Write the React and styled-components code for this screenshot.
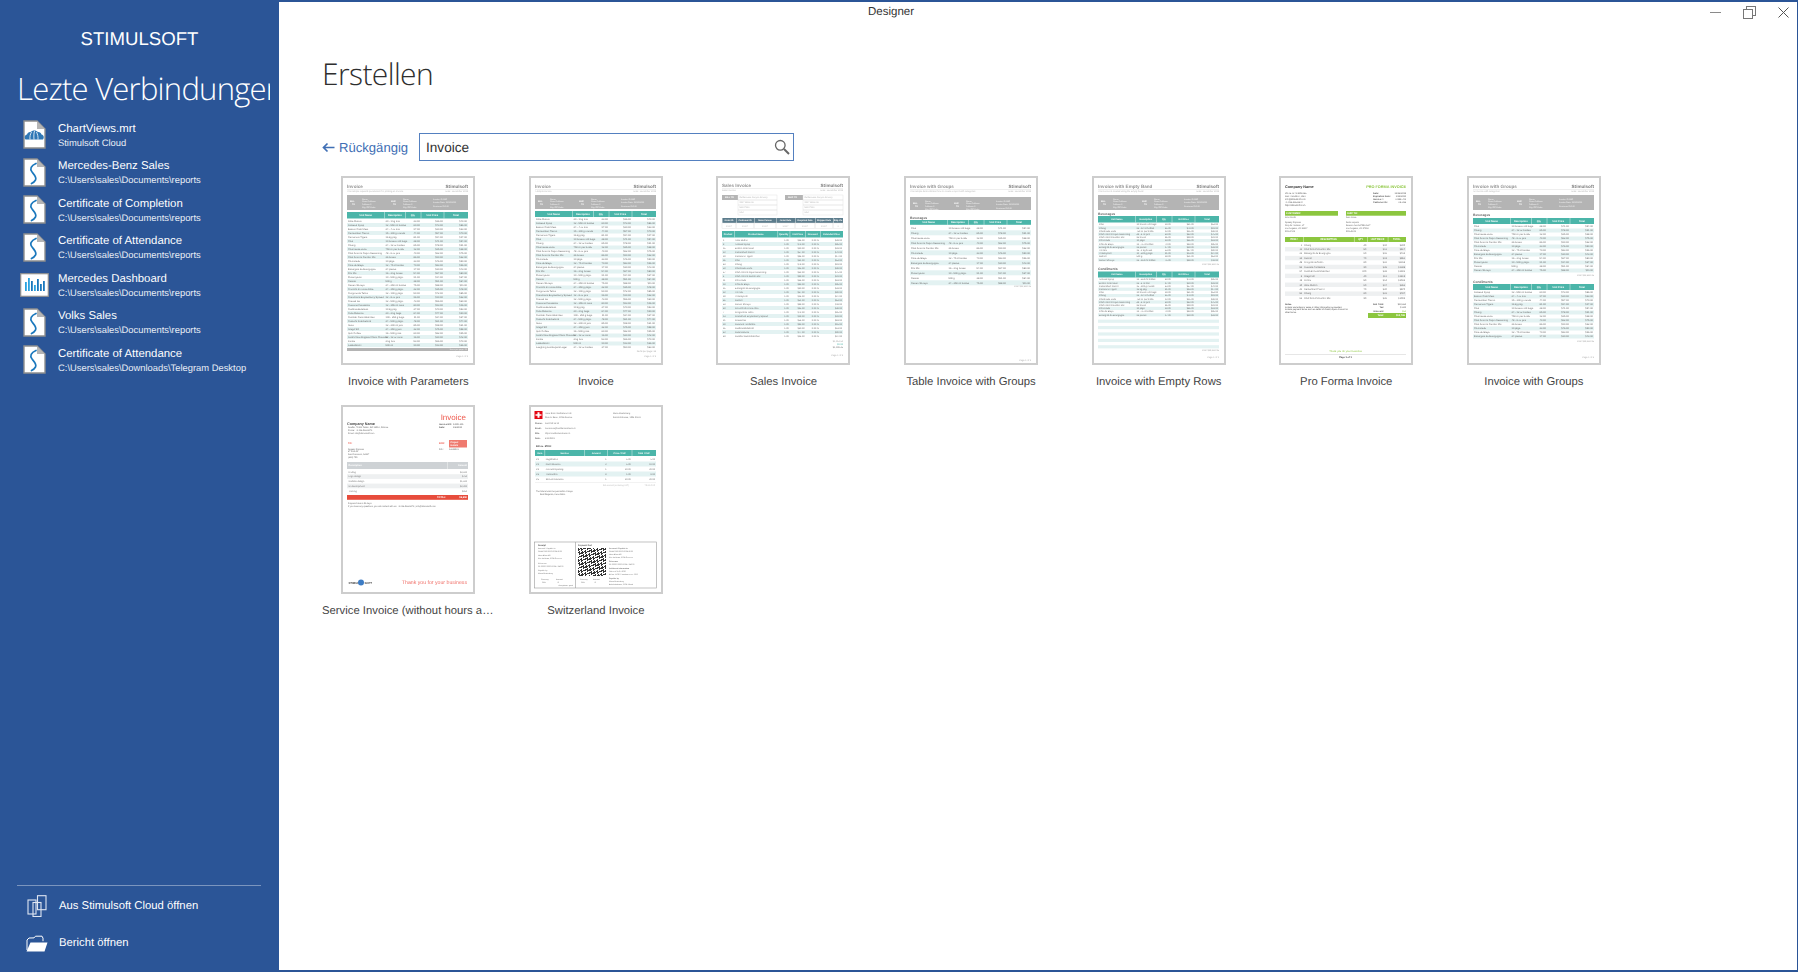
import React from 'react';
import styled, { createGlobalStyle } from 'styled-components';

const BLUE = '#2b5597';
const TEAL = '#4bb5a9';
const ALT = '#e3f2f2';
const GREEN = '#8cc63f';
const RED = '#e74c3c';

const Global = createGlobalStyle`
  html, body { margin: 0; padding: 0; background: ${BLUE}; }
  body { font-family: "Liberation Sans", Arial, sans-serif; text-rendering: geometricPrecision; }
`;

const Windowed = styled.div`
  width: 1798px; height: 972px; box-sizing: border-box; padding: 2px 1px 2px 0;
  background: ${BLUE}; display: flex; overflow: hidden;
`;
const Sidebar = styled.aside`
  width: 279px; flex: none; margin-top: -2px; margin-bottom: -2px; display: flex; flex-direction: column;
  color: #fff; padding-bottom: 10px; box-sizing: border-box;
`;
const Brand = styled.div`
  margin-top: 28px; text-align: center; font-size: 18.6px; line-height: 22px;
`;
const RecentTitle = styled.h2`
  margin: 17px 9px 0 17px; font: 300 31px/44px "Open Sans", sans-serif; letter-spacing: -.75px;
  white-space: nowrap; overflow: hidden;
`;
const RecentList = styled.div`
  margin-top: 5px; display: flex; flex-direction: column;
`;
const Recent = styled.div`
  height: 37.5px; display: flex; align-items: center; gap: 8px; padding-left: 18px;
`;
const IconCell = styled.div`
  width: 32px; flex: none; display: flex; justify-content: center; align-items: center;
`;
const RecentText = styled.div`
  display: flex; flex-direction: column; padding-top: 1.5px;
`;
const RecentName = styled.div`
  font-size: 11.4px; line-height: 13px; white-space: nowrap;
`;
const RecentPath = styled.div`
  font-size: 9.4px; line-height: 13px; white-space: nowrap; color: #e8edf5;
`;
const SideFoot = styled.div`
  margin-top: auto; margin-left: 17px; margin-right: 18px; border-top: 1px solid rgba(255,255,255,.38);
  padding-top: 1px; display: flex; flex-direction: column;
`;
const FootItem = styled.div`
  height: 37.5px; display: flex; align-items: center; font-size: 11.3px; gap: 10px; padding-left: 8px;
`;
const FootIcon = styled.div`
  width: 24px; flex: none; display: flex; justify-content: center;
`;

const Main = styled.main`
  flex: 1; background: #fff; display: flex; flex-direction: column; min-width: 0;
`;
const TitleBar = styled.header`
  height: 20px; display: flex; align-items: center; padding-left: 589px; padding-right: 8px;
  font-size: 11.5px; color: #333;
`;
const WinControls = styled.div`
  margin-left: auto; display: flex; align-items: center; gap: 22px;
`;
const Content = styled.div`
  padding: 30px 0 0 43px; display: flex; flex-direction: column;
`;
const Heading = styled.h1`
  margin: 0; font: 300 30px/44px "Open Sans", sans-serif; letter-spacing: -.6px; color: #2e2e2e;
`;
const Toolbar = styled.div`
  margin-top: 37px; display: flex; align-items: center; height: 28px;
`;
const Back = styled.div`
  display: flex; align-items: center; gap: 4px; color: #3f6fb5; font-size: 13.1px; width: 97px;
`;
const SearchBox = styled.div`
  width: 375px; height: 28px; box-sizing: border-box; border: 1.5px solid #5480c0; display: flex;
  align-items: center; justify-content: space-between; padding: 0 3px 0 6px; font-size: 13.6px; color: #333;
`;
const Grid = styled.div`
  margin-top: 15px; display: grid; grid-template-columns: repeat(7, 172.6px); column-gap: 15px; row-gap: 0;
  grid-auto-rows: 229px;
`;
const Cell = styled.div`
  display: flex; flex-direction: column; align-items: center; min-width: 0;
`;
const Card = styled.div`
  width: 134px; height: 189px; box-sizing: border-box; border: 2px solid #cdcdcd; background: #fff; flex: none;
`;
const Art = styled.svg`
  display: block; width: 130px; height: 185px; filter: blur(.3px);
`;
const Label = styled.div`
  margin-top: 10px; width: 100%; text-align: center; font-size: 11.3px; line-height: 15px; color: #444;
  white-space: nowrap; overflow: hidden; text-overflow: ellipsis;
`;
const Tx = styled.text`
  font-family: "Liberation Sans", Arial, sans-serif;
`;

/* ---------- side icons ---------- */
const Page = ({ children }) => (
  <svg width="23" height="29" viewBox="0 0 23 29">
    <path d="M1 1h13l8 8v19H1z" fill="#fff" stroke="#8f8f8f" strokeWidth="1.4" />
    <path d="M14 1v8h8z" fill="#b5b5b5" />
    {children}
  </svg>
);
const SIcon = () => (
  <Page>
    <path d="M13 5.500C8 7.500 6.500 11 9 14c2.500 3 5 5.500 3.500 8-.8 1.500-2 2.500-4 3.500" fill="none" stroke="#1b78bd" strokeWidth="1.700" strokeLinecap="round" />
  </Page>
);
const CloudIcon = () => (
  <Page>
    <path d="M2.500 19.500c-1.500-2-.8-4.500 1.500-5 .5-1.800 2-2.800 3.500-2.500 1.800-2 5.500-2.200 7.500 0 1.800-.2 3 1 3.500 2.500 2.300.5 3 3 1.500 5z" fill="#2f77b5" />
    <path d="M7 19.500c-.3-2.800.2-5.300 1.500-7.500M11 19.500c-.3-3.500-.2-6 .5-8.500M15 19.500c.2-2.800-.3-5-1.500-7.500" stroke="#fff" strokeWidth=".8" fill="none" />
  </Page>
);
const DashIcon = () => (
  <svg width="29" height="24" viewBox="0 0 29 24">
    <rect x=".7" y=".7" width="27.600" height="22.600" fill="#fff" stroke="#8f8f8f" strokeWidth="1.2" />
    {[[5,9,'#29a3e0'],[8,13,'#29a3e0'],[11,10,'#1b78bd'],[14,6,'#29a3e0'],[17,12,'#1b78bd'],[20,7,'#1b78bd'],[23,10,'#1b78bd']].map(([x, h, c]) => (
      <rect key={x} x={x} y={18 - h} width="1.800" height={h} fill={c} />
    ))}
  </svg>
);
const StackIcon = () => (
  <svg width="20" height="22" viewBox="0 0 20 22" fill="none" stroke="#dfe6f2" strokeWidth="1.1">
    <rect x="10.500" y=".7" width="8.500" height="14" />
    <rect x="1" y="5" width="8" height="14" />
    <rect x="6" y="7.500" width="8" height="14" />
  </svg>
);
const FolderIcon = () => (
  <svg width="22" height="17" viewBox="0 0 22 17">
    <path d="M1 15V5l2-2 5-.1 1.500-1.700h6.500l1 2v3" fill="none" stroke="#fff" strokeWidth="1" />
    <path d="M0.500 16.500 4.500 7.500h17l-3 9z" fill="#fff" />
  </svg>
);
const ArrowLeft = () => (
  <svg width="13" height="11" viewBox="0 0 13 11" fill="none" stroke="#3f6fb5" strokeWidth="1.700">
    <path d="M12.500 5.500H1.500M5.500 1.500 1.500 5.500l4 4" />
  </svg>
);
const SearchIcon = () => (
  <svg width="16" height="16" viewBox="0 0 16 16" fill="none" stroke="#666" >
    <circle cx="6.300" cy="6.300" r="4.800" strokeWidth="1.300" />
    <path d="M10 10l5 5" strokeWidth="2" />
  </svg>
);
const MinIcon = () => (
  <svg width="11" height="11" viewBox="0 0 11 11"><path d="M0 5.500h11" stroke="#8a8a8a" /></svg>
);
const RestoreIcon = () => (
  <svg width="13" height="13" viewBox="0 0 13 13" fill="#fff" stroke="#777">
    <rect x="3.500" y=".5" width="9" height="9" />
    <rect x=".5" y="3.500" width="9" height="9" />
  </svg>
);
const CloseIcon = () => (
  <svg width="11" height="11" viewBox="0 0 11 11"><path d="M.5.500l10 10M10.500.5l-10 10" stroke="#555" /></svg>
);

/* ---------- thumbnails ---------- */
const PRODUCTS = [
  ['Alice Mutton','20 - 1 kg tins'],['Aniseed Syrup','12 - 550 ml bottles'],['Boston Crab Meat','24 - 4 oz tins'],
  ['Camembert Pierrot','15 - 300 g rounds'],['Carnarvon Tigers','16 kg pkg.'],['Chai','10 boxes x 20 bags'],
  ['Chang','24 - 12 oz bottles'],['Chartreuse verte','750 cc per bottle'],["Chef Anton's Cajun Seasoning",'48 - 6 oz jars'],
  ["Chef Anton's Gumbo Mix",'36 boxes'],['Chocolade','10 pkgs.'],['Côte de Blaye','12 - 75 cl bottles'],
  ['Escargots de Bourgogne','24 pieces'],['Filo Mix','16 - 2 kg boxes'],['Flotemysost','10 - 500 g pkgs.'],
  ['Geitost','500 g'],['Genen Shouyu','24 - 250 ml bottles'],['Gnocchi di nonna Alice','24 - 250 g pkgs.'],
  ['Gorgonzola Telino','12 - 100 g pkgs'],["Grandma's Boysenberry Spread",'12 - 8 oz jars'],['Gravad lax','12 - 500 g pkgs.'],
  ['Guaraná Fantástica','12 - 355 ml cans'],['Gudbrandsdalsost','10 kg pkg.'],['Gula Malacca','20 - 2 kg bags'],
  ['Gumbär Gummibärchen','100 - 250 g bags'],["Gustaf's Knäckebröd",'24 - 500 g pkgs.'],['Ikura','12 - 200 ml jars'],
  ['Inlagd Sill','24 - 250 g  jars'],['Ipoh Coffee','16 - 500 g tins'],["Jack's New England Clam Chowder",'12 - 12 oz cans'],
  ['Konbu','2 kg box'],['Lakkalikööri','500 ml'],['Laughing Lumberjack Lager','24 - 12 oz bottles'],
];
const num = (i, k) => ((i * 37 + k * 13) % 90 + 10) + '.00';
const money = (i, k) => '$' + num(i, k);
const STD = [
  { w: .31, label: 'Unit Name', val: i => PRODUCTS[i % 33][0] },
  { w: .17, label: 'Description', val: i => PRODUCTS[i % 33][1] },
  { w: .13, label: 'Qty', end: 1, val: i => num(i, 1) },
  { w: .19, label: 'Unit Price', end: 1, val: i => money(i, 2) },
  { w: .2, label: 'Total', end: 1, val: i => money(i, 3) },
];
const SALES = [
  { w: .1, label: 'Product', val: i => String(i * 7 % 60 + 1) },
  { w: .36, label: 'Product Name', val: i => PRODUCTS[i % 33][0] },
  { w: .1, label: 'Quantity', end: 1, val: () => '1.00' },
  { w: .13, label: 'Unit Price', end: 1, val: i => money(i, 2) },
  { w: .12, label: 'Discount', end: 1, val: () => '0.00 %' },
  { w: .19, label: 'Extended Price', end: 1, val: i => money(i, 3) },
];

function Table({ y, head, rowH, n, start = 0, empty = 0, cols = STD, x = 6, w = 121, color = TEAL, alt = ALT, size = 2.5 }) {
  const total = n + empty;
  const xs = [];
  cols.reduce((acc, c) => { xs.push(acc); return acc + c.w * w; }, x);
  return (
    <g>
      <rect x={x} y={y} width={w} height={head} fill={color} />
      {xs.slice(1).map(cx => <rect key={cx} x={cx} y={y} width=".4" height={head} fill="#fff" />)}
      {cols.map((c, k) => (
        <Tx key={c.label} x={xs[k] + c.w * w / 2} y={y + head / 2 + .9} fontSize={size} fontWeight="700" fill="#fff" textAnchor="middle">{c.label}</Tx>
      ))}
      {Array.from({ length: total }, (_, r) => {
        const ry = y + head + .5 + r * rowH;
        return (
          <g key={r}>
            {r % 2 === 1 && <rect x={x} y={ry} width={w} height={rowH} fill={alt} />}
            {r < n && cols.map((c, k) => (
              <Tx key={k} x={c.end ? xs[k] + c.w * w - 1 : xs[k] + 1} y={ry + rowH / 2 + .8} fontSize={size} fill="#6e6e6e" textAnchor={c.end ? 'end' : 'start'}>{c.val(r + start)}</Tx>
            ))}
          </g>
        );
      })}
    </g>
  );
}

const Party = ({ x, y, tag }) => (
  <g>
    <Tx x={x} y={y + 5} fontSize="2.100" fontWeight="700" fill="#fff">{tag}</Tx>
    <Tx x={x + 2} y={y + 8} fontSize="2.100" fontWeight="700" fill="#fff">TO</Tx>
    {['Name', 'Street Address', 'Address 2', 'City, ZIP Code'].map((t, i) => (
      <Tx key={t} x={x + 12} y={y + 2.500 + i * 2.700} fontSize="2.100" fill="#f4f4f4">{t}</Tx>
    ))}
  </g>
);

function DocHead({ title, sub, bandY = 19, bandH = 15 }) {
  return (
    <g>
      <Tx x="6" y="11.500" fontSize="4.600" fontWeight="700" fill="#969696">{title}</Tx>
      <Tx x="127" y="11.500" fontSize="4.600" fontWeight="700" fill="#808080" textAnchor="end">Stimulsoft</Tx>
      <rect x="6" y="13" width="121" height=".5" fill="#ddd" />
      <Tx x="6" y="15.800" fontSize="2.300" fill="#b5b5b5">{sub}</Tx>
      <Tx x="127" y="15.800" fontSize="2.300" fill="#b5b5b5" textAnchor="end">Date: December 2019</Tx>
      <rect x="6" y={bandY} width="121" height={bandH} fill="#b4b4b4" />
      <Party x={9} y={bandY + 2} tag="BILL" />
      <Party x={50} y={bandY + 2} tag="SHIP" />
      {['Invoice #12345', 'Invoice Date: 12/16/2019', 'Customer ID 123'].map((t, i) => (
        <Tx key={t} x="92" y={bandY + 4.500 + i * 3.600} fontSize="2.100" fill="#f4f4f4">{t}</Tx>
      ))}
    </g>
  );
}
const PageNo = ({ y = 181, t = 'Page 1 of 3', x = 127 }) => <Tx x={x} y={y} fontSize="2.300" fill="#aaa" textAnchor="end">{t}</Tx>;
const Section = ({ y, children }) => <Tx x="6" y={y} fontSize="3.400" fontWeight="700" fill="#666">{children}</Tx>;
const Totals = ({ y, t }) => <Tx x="127" y={y} fontSize="2.300" fill="#a5a5a5" textAnchor="end">{t}</Tx>;

const ArtParams = () => (
  <>
    <DocHead title="Invoice" sub="The sample requests parameters for printing an invoice" />
    <Table y={36} head={6.500} rowH={4} n={32} />
    <rect x="6" y="172" width="121" height="3" fill="#b4b4b4" />
    <Tx x="126" y="174.300" fontSize="2.100" fill="#eee" textAnchor="end">Items per page: 32</Tx>
    <PageNo />
  </>
);
const ArtInvoice = () => (
  <>
    <DocHead title="Invoice" sub="A simple invoice" bandH={14} />
    <Table y={35} head={6} rowH={4} n={33} />
    <Totals y={175.500} t="Items per page: 33" />
    <PageNo />
  </>
);
const ArtSales = () => (
  <>
    <Tx x="6" y="11" fontSize="4.600" fontWeight="700" fill="#969696">Sales Invoice</Tx>
    <Tx x="127" y="11" fontSize="4.600" fontWeight="700" fill="#808080" textAnchor="end">Stimulsoft</Tx>
    <rect x="6" y="12.500" width="121" height=".5" fill="#ddd" />
    <Tx x="6" y="15" fontSize="2.300" fill="#b5b5b5">Sales Invoice</Tx>
    <Tx x="127" y="15" fontSize="2.300" fill="#b5b5b5" textAnchor="end">Date: December 2019</Tx>
    {[[6, 'BILL TO', 22, 'Rattlesnake Canyon Grocery'], [69, 'SHIP TO', 87, 'Rattlesnake Canyon Grocery']].map(([x, tag, fx, a]) => (
      <g key={tag}>
        <rect x={x} y="19" width={fx - x} height="5" fill="#b4b4b4" />
        <Tx x={x + 3} y="22.300" fontSize="2.300" fontWeight="700" fill="#fff">{tag}</Tx>
        {[0, 1, 2, 3].map(i => (
          <g key={i}>
            <rect x={fx} y={19 + i * 5} width={x === 6 ? 39 : 40} height="5" fill="none" stroke="#ddd" strokeWidth=".4" />
            <Tx x={fx + 1.500} y={22.300 + i * 5} fontSize="2.200" fill="#b5b5b5">{[a, '2817 Milton Dr.', 'NM 87110', 'USA'][i]}</Tx>
          </g>
        ))}
      </g>
    ))}
    <rect x="6" y="42" width="121" height="5" fill="#5c7c8c" />
    {[['Order ID', 6, 14], ['Customer ID', 20, 18], ['Sales Person', 38, 22], ['Order Date', 60, 19], ['Required Date', 79, 20], ['Shipped Date', 99, 18], ['Ship Via', 117, 10]].map(([t, x, w]) => (
      <g key={t}>
        <rect x={x} y="47" width={w} height="5.500" fill="none" stroke="#ddd" strokeWidth=".4" />
        <rect x={x} y="42" width=".4" height="5" fill="#fff" />
        <Tx x={x + w / 2} y="45.300" fontSize="2.200" fontWeight="700" fill="#fff" textAnchor="middle">{t}</Tx>
        <Tx x={x + w / 2} y="50.500" fontSize="2.100" fill="#b5b5b5" textAnchor="middle">{t === 'Ship Via' ? '3' : '10337'}</Tx>
      </g>
    ))}
    <Table y={55} head={6.500} rowH={4} n={25} cols={SALES} size={2.300} />
    <Totals y={165.500} t="$1,014.50" />
    <Tx x="127" y="168.500" fontSize="2.300" fill={TEAL} textAnchor="end">$0.00</Tx>
    <Tx x="127" y="171.500" fontSize="2.300" fill="#777" textAnchor="end">$1,008.45</Tx>
    <PageNo y={180} />
  </>
);
const ArtTableGroups = () => (
  <>
    <DocHead title="Invoice with Groups" sub="The sample demonstrates how to create a report with categories" bandY={21} bandH={13} />
    <Section y={42.500}>Beverages</Section>
    <Table y={44} head={4.800} rowH={5} n={12} start={5} />
    <Totals y={110.500} t="Total:   $12,460.25" />
    <PageNo y={185} t="Page 1 of 2" />
  </>
);
const ArtEmpty = () => (
  <>
    <DocHead title="Invoice with Empty Band" sub="The invoice is created using the Empty band" />
    <Section y={38.500}>Beverages</Section>
    <Table y={40} head={6.500} rowH={3.200} n={12} start={5} size={2.300} />
    <Totals y={88.800} t="Total:   $12,460.25" />
    <Section y={94}>Condiments</Section>
    <Table y={95.500} head={6} rowH={3.200} n={12} start={1} empty={10} size={2.300} />
    <Totals y={174.500} t="Total:   $19,350.95" />
    <PageNo y={182} t="Page 1 of 1" />
  </>
);
const ArtProForma = () => (
  <>
    <Tx x="6" y="11.500" fontSize="3.800" fontWeight="700" fill="#333">Company Name</Tx>
    <Tx x="127" y="11.500" fontSize="3.800" fontWeight="700" fill={GREEN} textAnchor="end">PRO FORMA INVOICE</Tx>
    {['PO. B ox: 97899-245', 'San Francisco, USA', 'info@stimulsoft.com', '+1 014-266-8470', 'http://stimulsoft.com'].map((t, i) => (
      <Tx key={t} x="6" y={18 + i * 3} fontSize="2.300" fill="#555">{t}</Tx>
    ))}
    {[['Date:', '12/26/2019'], ['Expiration Date:', '1/18/2020'], ['Invoice #:', 'A-998-701'], ['Customer ID:', 'AS-234']].map(([a, b], i) => (
      <g key={a}>
        <Tx x="94" y={18 + i * 3} fontSize="2.300" fontWeight="700" fill="#555">{a}</Tx>
        <Tx x="127" y={18 + i * 3} fontSize="2.300" fill="#555" textAnchor="end">{b}</Tx>
      </g>
    ))}
    {[[6, 53, 'CUSTOMER:', ['John Smith', 'Speedy Express', 'Ship Dr. Yeddah, LT', 'Los Angeles, CA 90117', '555-67-89']], [67, 60, 'SHIP TO:', ['Dan Jones', 'Dodo Liquids', 'Beacon Ave 947890-94/7', 'Los Angeles, CA 57190', '555-45-21']]].map(([x, w, t, lines]) => (
      <g key={t}>
        <rect x={x} y="35" width={w} height="4.700" fill={GREEN} />
        <Tx x={x + 1} y="38.200" fontSize="2.500" fontWeight="700" fill="#fff">{t}</Tx>
        {lines.map((l, i) => <Tx key={l} x={x} y={[42.300, 46.800, 49.800, 52.800, 56][i]} fontSize="2.200" fill="#666">{l}</Tx>)}
      </g>
    ))}
    <Table y={61} head={5} rowH={4.450} n={13} cols={[
      { w: .15, label: 'ITEM #', end: 1, val: i => String(i * 11 % 70 + 1) },
      { w: .42, label: 'DESCRIPTION', val: i => PRODUCTS[(i * 3 + 6) % 33][0] },
      { w: .11, label: 'QTY', end: 1, val: i => String((i % 7 + 4) * 10) },
      { w: .17, label: 'UNIT PRICE', end: 1, val: i => '$' + (i * 3 % 20 + 10) },
      { w: .15, label: 'TOTAL', end: 1, val: i => '$' + (i * 217 % 1900 + 300) },
    ]} color={GREEN} alt="#eef0f1" size={2.400} />
    <Tx x="6" y="129" fontSize="2.200" fontWeight="700" fill="#444">Notes:</Tx>
    {['Include warranties or sales or other information as needed.', 'Include payment terms such as Letter of Credit, Open Account or', 'other terms.'].map((t, i) => (
      <Tx key={t} x="6" y={131.500 + i * 2.500} fontSize="2.200" fill="#444">{t}</Tx>
    ))}
    {[['Sub Total:', '$10,560'], ['Tax:', '$ 500'], ['Discount:', '$50']].map(([a, b], i) => (
      <g key={a}>
        <Tx x="105" y={129 + i * 3.300} fontSize="2.300" fontWeight="700" fill="#555" textAnchor="end">{a}</Tx>
        <Tx x="127" y={129 + i * 3.300} fontSize="2.300" fill={i === 2 ? GREEN : '#555'} textAnchor="end">{b}</Tx>
      </g>
    ))}
    <rect x="89" y="137" width="38" height="5" fill={GREEN} />
    <Tx x="105" y="140.300" fontSize="2.500" fontWeight="700" fill="#fff" textAnchor="end">Total:</Tx>
    <Tx x="126" y="140.300" fontSize="2.500" fontWeight="700" fill="#fff" textAnchor="end">$10,788</Tx>
    <Tx x="66.500" y="176" fontSize="2.600" fill={GREEN} textAnchor="middle">Thank you for your business</Tx>
    <rect x="6" y="178" width="121" height=".5" fill="#ccc" />
    <Tx x="66.500" y="181.500" fontSize="2.400" fontWeight="700" fill="#444" textAnchor="middle">Page 1 of 1</Tx>
  </>
);
const ArtGroups = () => (
  <>
    <DocHead title="Invoice with Groups" sub="An invoice with categories" />
    <Section y={40}>Beverages</Section>
    <Table y={42} head={6} rowH={4} n={12} start={5} />
    <Totals y={99.500} t="Total:   $12,460.25" />
    <Section y={106.500}>Condiments</Section>
    <Table y={108} head={6} rowH={4} n={12} start={1} />
    <Totals y={165.500} t="Total:   $19,350.95" />
    <PageNo y={182} t="Page 1 of 4" />
  </>
);
const ArtService = () => (
  <>
    <Tx x="125" y="14.500" fontSize="8" fill="#ee5a4e" textAnchor="end">Invoice</Tx>
    <Tx x="6" y="19.500" fontSize="3.700" fontWeight="700" fill="#444">Company Name</Tx>
    {['Seattle, 71301 Telikin, BC 19210, Estonia', 'Phone: +1 014-266-8470', 'Email: info@stimulsoft.com'].map((t, i) => (
      <Tx key={t} x="7" y={23 + i * 3.200} fontSize="2.200" fill="#666">{t}</Tx>
    ))}
    <Tx x="98" y="20" fontSize="2.300" fontWeight="700" fill="#555">Invoice NO:</Tx>
    <Tx x="112" y="20" fontSize="2.300" fill="#555">0-000-101</Tx>
    <Tx x="98" y="23" fontSize="2.300" fontWeight="700" fill="#555">Date:</Tx>
    <Tx x="112" y="23" fontSize="2.300" fill="#555">1/6/2020</Tx>
    <Tx x="7" y="39" fontSize="2.500" fontWeight="700" fill="#ee5a4e">TO:</Tx>
    <Tx x="98" y="39" fontSize="2.500" fontWeight="700" fill="#ee5a4e">FOR:</Tx>
    <rect x="108" y="35" width="18" height="7.500" fill="#ef7a6f" />
    <Tx x="109.500" y="38" fontSize="2.300" fontWeight="700" fill="#fff">Project</Tx>
    <Tx x="109.500" y="41" fontSize="2.300" fontWeight="700" fill="#fff">Details</Tx>
    <Tx x="98" y="45" fontSize="2.200" fill="#666">PO#</Tx>
    <Tx x="108" y="45" fontSize="2.200" fill="#666">14619801</Tx>
    {['Speedy Express', '47 Pine St', 'San Francisco, 94117', '(408) 725'].map((t, i) => (
      <Tx key={t} x="7" y={44.500 + i * 2.800} fontSize="2.200" fill="#666">{t}</Tx>
    ))}
    <rect x="6" y="57" width="121" height="7" fill="#ced2d5" />
    <rect x="106" y="57" width=".4" height="7" fill="#fff" />
    <Tx x="7.500" y="61.300" fontSize="2.400" fontWeight="700" fill="#fff">Description</Tx>
    <Tx x="126" y="61.300" fontSize="2.400" fontWeight="700" fill="#fff" textAnchor="end">Amount</Tx>
    {[['Coding', '$3,500'], ['Logo design', '$750'], ['Website design', '$1,500'], ['UI development', '$2,200'], ['Training', '$350']].map(([a, b], i) => (
      <g key={a}>
        {i % 2 === 1 && <rect x="6" y={64.500 + i * 4.700} width="121" height="4.700" fill="#eef0f1" />}
        <Tx x="7.500" y={67.700 + i * 4.700} fontSize="2.300" fill="#777">{a}</Tx>
        <Tx x="126" y={67.700 + i * 4.700} fontSize="2.300" fill="#777" textAnchor="end">{b}</Tx>
      </g>
    ))}
    <rect x="6" y="90" width="121" height="4.800" fill={RED} />
    <Tx x="105" y="93.300" fontSize="2.500" fontWeight="700" fill="#fff" textAnchor="end">TOTAL:</Tx>
    <Tx x="126" y="93.300" fontSize="2.500" fontWeight="700" fill="#fff" textAnchor="end">$8,850</Tx>
    <Tx x="7" y="99" fontSize="2.200" fill="#666">Payment due in 30 days</Tx>
    <Tx x="7" y="102.300" fontSize="2.200" fill="#666">If you have any questions, you will contact with us: +1 014-266-8470 | info@stimulsoft.com</Tx>
    <Tx x="7.500" y="178.500" fontSize="2.800" fontWeight="700" fill="#444">STIMUL</Tx>
    <circle cx="20" cy="177.500" r="3" fill="#3d7cc4" />
    <Tx x="23.500" y="178.500" fontSize="2.800" fontWeight="700" fill="#444">SOFT</Tx>
    <Tx x="126" y="179" fontSize="5.200" fill="#f0716a" textAnchor="end">Thank you for your business</Tx>
  </>
);
const qr = Array.from({ length: 28 * 28 }, (_, i) => ((i * i * 7 + i * 31 + (i >> 2) * 13) % 11) < 5);
const ArtSwiss = () => (
  <>
    <rect x="5.500" y="6" width="8" height="8" fill="#e30613" />
    <path d="M8.500 7.500h2v2h2v1.500h-2v2h-2v-2h-2V9.500h2z" fill="#fff" transform="translate(0 -.3)" />
    <Tx x="16" y="9" fontSize="2.200" fill="#777">Hans Bürin Switzerland AG</Tx>
    <Tx x="16" y="13" fontSize="2.200" fill="#777">Rue du Beau, 1234 Geneva</Tx>
    <Tx x="84" y="9" fontSize="2.200" fill="#777">Maria Musterberg</Tx>
    <Tx x="84" y="13" fontSize="2.200" fill="#777">Bahnhofstrasse, 1234 Zürich</Tx>
    {[['Phone:', '044 213 14 15'], ['Email:', 'hansmuss@switzerlandbank.ch'], ['Site:', 'https://switzerlandbank.ch'], ['Date:', '6/10/2019']].map(([a, b], i) => (
      <g key={a}>
        <Tx x="6" y={19 + i * 5} fontSize="2.200" fontWeight="700" fill="#666">{a}</Tx>
        <Tx x="16" y={19 + i * 5} fontSize="2.200" fill="#777">{b}</Tx>
      </g>
    ))}
    <Tx x="7" y="42" fontSize="2.400" fontWeight="700" fill="#444">Bill no. 87912</Tx>
    <Table y={45} head={6} rowH={5} n={5} size={2.300} cols={[
      { w: .08, label: 'Item', val: i => 'P.' + (i + 1) },
      { w: .33, label: 'Service', val: i => ['Registration', 'Card Issuance', 'Account Opening', 'Transaction', 'Stones Insurance'][i] },
      { w: .19, label: 'Amount', end: 1, val: i => String([1, 2, 1, 8, 1][i]) },
      { w: .2, label: 'Price / CHF', end: 1, val: i => ['5.00', '5.00', '20.00', '1.00', '20.00'][i] },
      { w: .2, label: 'Total / CHF', end: 1, val: i => ['5.00', '10.00', '20.00', '8.00', '20.00'][i] },
    ]} />
    <rect x="6" y="77.500" width="121" height=".4" fill="#ddd" />
    <Tx x="100" y="80.800" fontSize="2.200" fill="#bbb" textAnchor="end">Bill amount (including VAT)</Tx>
    <Tx x="126" y="80.800" fontSize="2.200" fill="#bbb" textAnchor="end">73.00 CHF</Tx>
    <Tx x="7" y="86.500" fontSize="2.200" fill="#666">The total should be paid within 8 days.</Tx>
    <Tx x="11" y="90" fontSize="2.200" fill="#666">Best Regards, Hans Bürin</Tx>
    <rect x="5.500" y="137" width="122" height="46" fill="none" stroke="#999" strokeWidth=".6" />
    <rect x="46" y="137" width=".6" height="46" fill="#999" />
    <Tx x="9" y="141" fontSize="2.200" fontWeight="700" fill="#555">Receipt</Tx>
    <Tx x="49" y="141" fontSize="2.200" fontWeight="700" fill="#555">Payment Part</Tx>
    {[144, 147, 151, 154, 159, 162, 166, 169].map((y, i) => (
      <Tx key={y} x="9" y={y} fontSize="1.900" fill="#777">{['Account / Payable to', 'CH44 3199 9123 0008 8012', 'Hans Bürin AG', 'Rue du Beau, 1234 Geneva', 'Reference', '21 00000 00003 13947 14300', 'Payable by', 'Maria Musterberg'][i]}</Tx>
    ))}
    <Tx x="12" y="175" fontSize="1.900" fill="#777">Currency</Tx>
    <Tx x="27" y="175" fontSize="1.900" fill="#777">Amount</Tx>
    <Tx x="13" y="177.500" fontSize="1.900" fill="#777">CHF</Tx>
    <Tx x="28" y="177.500" fontSize="1.900" fill="#777">73</Tx>
    <Tx x="44" y="181" fontSize="1.900" fill="#777" textAnchor="end">Acceptance point</Tx>
    <rect x="49" y="143" width="28" height="28" fill="#fff" />
    {qr.map((on, i) => on && <rect key={i} x={49 + (i % 28)} y={143 + Math.floor(i / 28)} width="1" height="1" fill="#333" />)}
    <Tx x="51" y="175" fontSize="1.900" fill="#777">Currency</Tx>
    <Tx x="64" y="175" fontSize="1.900" fill="#777">Amount</Tx>
    <Tx x="52" y="177.500" fontSize="1.900" fill="#777">CHF</Tx>
    <Tx x="65" y="177.500" fontSize="1.900" fill="#777">73</Tx>
    {[[144, 'Account / Payable to', 1], [147, 'CH44 3199 9123 0008 8012'], [150, 'Hans Bürin AG'], [153, 'Rue du Beau, 1234 Geneva'], [157, 'Reference', 1], [160, '21 00000 00003 13947 14300'], [164, 'Additional information', 1], [167, 'Order of 15.06.2020'], [170, 'Bill no. 87912 / customer no. 7999'], [174, 'Payable by', 1], [177, 'Maria Musterberg'], [180, 'Bahnhofstrasse, 1234 Zürich']].map(([y, t, b]) => (
      <Tx key={y} x="80" y={y} fontSize="1.900" fontWeight={b ? 700 : 400} fill="#777">{t}</Tx>
    ))}
  </>
);

const TEMPLATES = [
  ['Invoice with Parameters', ArtParams],
  ['Invoice', ArtInvoice],
  ['Sales Invoice', ArtSales],
  ['Table Invoice with Groups', ArtTableGroups],
  ['Invoice with Empty Rows', ArtEmpty],
  ['Pro Forma Invoice', ArtProForma],
  ['Invoice with Groups', ArtGroups],
  ['Service Invoice (without hours and quantity)', ArtService],
  ['Switzerland Invoice', ArtSwiss],
];
const RECENTS = [
  [CloudIcon, 'ChartViews.mrt', 'Stimulsoft Cloud'],
  [SIcon, 'Mercedes-Benz Sales', 'C:\\Users\\sales\\Documents\\reports'],
  [SIcon, 'Certificate of Completion', 'C:\\Users\\sales\\Documents\\reports'],
  [SIcon, 'Certificate of Attendance', 'C:\\Users\\sales\\Documents\\reports'],
  [DashIcon, 'Mercedes Dashboard', 'C:\\Users\\sales\\Documents\\reports'],
  [SIcon, 'Volks Sales', 'C:\\Users\\sales\\Documents\\reports'],
  [SIcon, 'Certificate of Attendance', 'C:\\Users\\sales\\Downloads\\Telegram Desktop'],
];

export default function App() {
  return (
    <>
      <Global />
      <Windowed>
        <Sidebar>
          <Brand>STIMULSOFT</Brand>
          <RecentTitle>Lezte Verbindungen</RecentTitle>
          <RecentList>
            {RECENTS.map(([Icon, name, path], i) => (
              <Recent key={i}>
                <IconCell><Icon /></IconCell>
                <RecentText>
                  <RecentName>{name}</RecentName>
                  <RecentPath>{path}</RecentPath>
                </RecentText>
              </Recent>
            ))}
          </RecentList>
          <SideFoot>
            <FootItem><FootIcon><StackIcon /></FootIcon>Aus Stimulsoft Cloud öffnen</FootItem>
            <FootItem><FootIcon><FolderIcon /></FootIcon>Bericht öffnen</FootItem>
          </SideFoot>
        </Sidebar>
        <Main>
          <TitleBar>
            Designer
            <WinControls><MinIcon /><RestoreIcon /><CloseIcon /></WinControls>
          </TitleBar>
          <Content>
            <Heading>Erstellen</Heading>
            <Toolbar>
              <Back><ArrowLeft />Rückgängig</Back>
              <SearchBox>Invoice<SearchIcon /></SearchBox>
            </Toolbar>
            <Grid>
              {TEMPLATES.map(([name, ArtBody]) => (
                <Cell key={name}>
                  <Card><Art viewBox="2 2 130 185"><ArtBody /></Art></Card>
                  <Label>{name}</Label>
                </Cell>
              ))}
            </Grid>
          </Content>
        </Main>
      </Windowed>
    </>
  );
}
